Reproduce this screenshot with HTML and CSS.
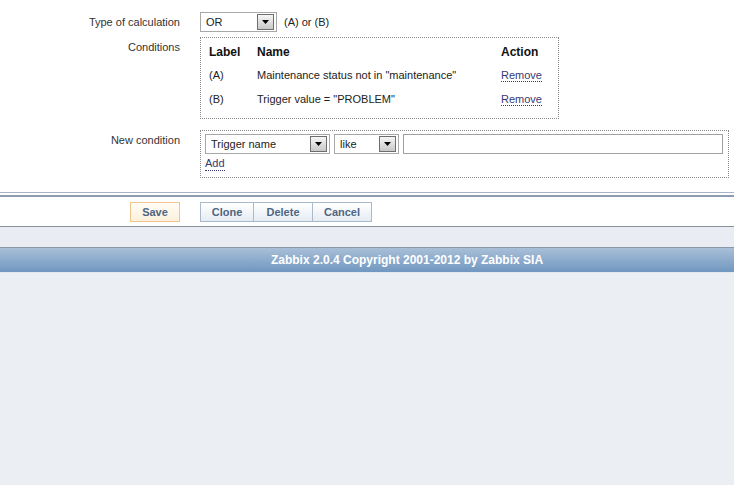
FILE: index.html
```html
<!DOCTYPE html>
<html lang="en">
<head>
  <meta charset="UTF-8" />
  <title>Action conditions</title>
  <link rel="stylesheet" href="styles.css">
</head>
<body>
  <div class="content">
    <form class="form-list">
      <div class="row row-calc">
        <div class="row-label">Type of calculation</div>
        <div class="row-field">
          <span class="select select-calc">
            <select><option>OR</option></select>
            <span class="arrow"><svg width="7" height="4" viewBox="0 0 7 4"><path d="M0 0H7L3.5 4Z" fill="#000"/></svg></span>
          </span>
          <span class="formula">(A) or (B)</span>
        </div>
      </div>

      <div class="row">
        <div class="row-label">Conditions</div>
        <div class="row-field">
          <div class="box box-conditions">
            <table class="cond-table">
              <thead>
                <tr><th class="col-label">Label</th><th class="col-name">Name</th><th class="col-action">Action</th></tr>
              </thead>
              <tbody>
                <tr><td>(A)</td><td>Maintenance status not in "maintenance"</td><td><a class="link">Remove</a></td></tr>
                <tr><td>(B)</td><td>Trigger value = "PROBLEM"</td><td><a class="link">Remove</a></td></tr>
              </tbody>
            </table>
          </div>
        </div>
      </div>

      <div class="row row-new">
        <div class="row-label">New condition</div>
        <div class="row-field">
          <div class="box box-new">
            <div class="new-line">
              <span class="select select-type">
                <select><option>Trigger name</option></select>
                <span class="arrow"><svg width="7" height="4" viewBox="0 0 7 4"><path d="M0 0H7L3.5 4Z" fill="#000"/></svg></span>
              </span>
              <span class="select select-op">
                <select><option>like</option></select>
                <span class="arrow"><svg width="7" height="4" viewBox="0 0 7 4"><path d="M0 0H7L3.5 4Z" fill="#000"/></svg></span>
              </span>
              <input type="text" class="text-input" />
            </div>
            <a class="link add-link">Add</a>
          </div>
        </div>
      </div>

      <div class="form-footer">
        <div class="form-footer-inner">
          <div class="save-cell"><button type="button" class="btn btn-save">Save</button></div>
          <div class="btn-group">
            <button type="button" class="btn">Clone</button>
            <button type="button" class="btn">Delete</button>
            <button type="button" class="btn">Cancel</button>
          </div>
        </div>
      </div>
    </form>
  </div>

  <div class="band"></div>
  <div class="page-footer">Zabbix 2.0.4 Copyright 2001-2012 by Zabbix SIA</div>
</body>
</html>
```

FILE: styles.css
```css
:root {
  --text: #222;
  --link: #363a73;
  --dots: #8a8a8a;
  --btn-text: #4f6582;
}

body {
  margin: 0;
  font-family: 'Liberation Sans', Arial, sans-serif;
  font-size: 11px;
  color: var(--text);
  background: #ebeef2;
}

.content {
  background: #fff;
  border-bottom: 1px solid #8a9199;
}

.form-list {
  padding-top: 12px;
}

.row {
  display: grid;
  grid-template-columns: 180px 529px;
  column-gap: 20px;
  margin-bottom: 5px;
}

.row-label {
  text-align: right;
  line-height: 14px;
  padding-top: 3px;
  color: #333;
}

.row-calc {
  align-items: center;
  height: 20px;
}

.row-calc .row-label {
  padding-top: 0;
}

.row-field {
  display: flex;
  align-items: center;
}

.row-new {
  margin-top: 11px;
  margin-bottom: 0;
}

.formula {
  margin-left: 7px;
}

/* fake windows-classic select */
.select {
  display: inline-flex;
  align-items: center;
  height: 20px;
  box-sizing: border-box;
  border: 1px solid #a8a8a8;
  background: #fff;
}

.select select {
  appearance: none;
  -webkit-appearance: none;
  border: none;
  background: transparent;
  font: inherit;
  color: var(--text);
  padding: 0 0 0 5px;
  flex: 1;
  min-width: 0;
  height: 18px;
  outline: none;
}

.arrow {
  width: 15px;
  height: 14px;
  margin-right: 2px;
  border: 1px solid #6e6e6e;
  background: linear-gradient(#f6f6f6, #c8c8c8);
  display: flex;
  align-items: center;
  justify-content: center;
}

.select-calc { width: 77px; }
.select-type { width: 125px; }
.select-op { width: 65px; margin-left: 4px; }

.box {
  border: 1px dotted var(--dots);
  box-sizing: border-box;
}

.box-conditions {
  width: 359px;
  padding: 3px 8px 7px 8px;
}

.cond-table {
  border-collapse: collapse;
}

.cond-table th,
.cond-table td {
  padding: 0;
  height: 24px;
  text-align: left;
  font-weight: normal;
}

.cond-table th {
  height: 22px;
  font-weight: bold;
  font-size: 12px;
  color: #111;
}

.col-label { width: 48px; }
.col-name { width: 244px; }
.col-action { width: 48px; }

.link {
  color: var(--link);
  text-decoration: none;
  border-bottom: 1px dotted var(--link);
  cursor: pointer;
}

.box-new {
  width: 529px;
  padding: 3px 4px 6px 4px;
}

.new-line {
  display: flex;
  align-items: center;
}

.text-input {
  width: 320px;
  height: 20px;
  box-sizing: border-box;
  margin-left: 4px;
  border: 1px solid #a0a0a0;
  padding: 0 4px;
  font: inherit;
}

.add-link {
  display: inline-block;
  margin-top: 3px;
  line-height: 13px;
}

.form-footer {
  margin-top: 14px;
  border-top: 1px solid #a9b5c6;
}

.form-footer-inner {
  margin-top: 2px;
  border-top: 2px solid #8e9cb1;
  padding: 5px 0 4px;
  display: grid;
  grid-template-columns: 180px auto;
  column-gap: 20px;
}

.save-cell {
  text-align: right;
}

.btn {
  height: 20px;
  box-sizing: border-box;
  padding: 0 10px;
  font-family: inherit;
  font-size: 11px;
  font-weight: bold;
  color: var(--btn-text);
  border: 1px solid #a9b9cb;
  background: linear-gradient(#ffffff, #e5ecf3);
  cursor: pointer;
}

.btn-save {
  width: 50px;
  border-color: #f0c48d;
  background: linear-gradient(#fffdf6, #fdf0dc);
}

.btn-group {
  display: flex;
}

.btn-group .btn {
  width: 54px;
}

.btn-group .btn + .btn {
  border-left: none;
  width: 59px;
}

.band {
  height: 20px;
  background: #e9edf3;
  border-bottom: 1px solid #8e99a8;
}

.page-footer {
  height: 24px;
  line-height: 24px;
  padding-left: 80px;
  text-align: center;
  color: #fff;
  font-weight: bold;
  font-size: 12px;
  background: linear-gradient(#a9bfd8, #7097bf);
  border-bottom: 1px solid #e2e8f0;
}
```
